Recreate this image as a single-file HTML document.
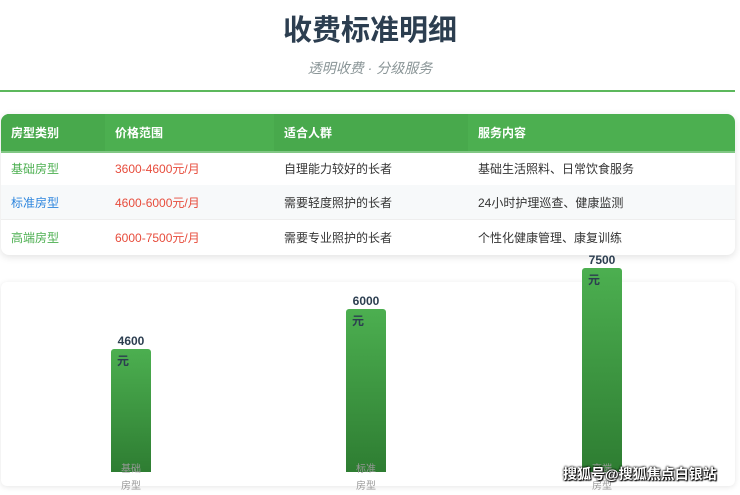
<!DOCTYPE html>
<html><head><meta charset="utf-8"><style>
body{margin:0;width:740px;height:491px;background:#fff;font-family:"Liberation Sans","Noto Sans CJK SC",sans-serif;position:relative;overflow:hidden}
.t{position:absolute;left:0;width:740px;text-align:center;top:11px;font-size:29px;font-weight:bold;color:#2c3e50;line-height:40px}
.s{position:absolute;left:0;width:740px;text-align:center;top:58px;font-size:14px;font-style:italic;color:#8a9597;line-height:20px}
.hr{position:absolute;left:0;top:90px;width:735px;height:2px;background:#5cb85c}
.tb{position:absolute;left:1px;top:114px;width:734px;height:141px;border-radius:8px;box-shadow:0 2px 8px rgba(0,0,0,.12);overflow:hidden;background:#fff}
.r{position:absolute;left:0;width:734px;font-size:12px;color:#333}
.r div{position:absolute;top:0;height:100%;display:flex;align-items:center;padding-left:10px;box-sizing:border-box}
.h{top:0;height:37px;background:#4caf50;color:#fff;font-weight:bold;border-bottom:2px solid #81c784}
.h div:nth-child(odd){background:#48a94c}
.c1{left:0;width:104px}.c2{left:104px;width:169px}.c3{left:273px;width:194px}.c4{left:467px;width:267px}
.g{color:#4caf50}.b{color:#2e86de}.p{color:#e74c3c}
.ch{position:absolute;left:1px;top:282px;width:734px;height:204px;box-shadow:0 1px 6px rgba(0,0,0,.1);border-radius:6px;background:#fff}
.bar{position:absolute;width:40px;border-radius:3px 3px 0 0;background:linear-gradient(#4caf50,#2e7d32)}
.v{position:absolute;width:60px;text-align:center;font-size:12px;font-weight:bold;color:#2c3e50}
.y{position:absolute;font-size:12px;font-weight:bold;color:#2c3e50}
.l{position:absolute;width:40px;text-align:center;font-size:10px;color:#999;line-height:17px}
.wm{position:absolute;left:563px;top:464px;font-size:14px;font-weight:bold;color:#fff;text-shadow:0 0 2px #000,0 0 2px #000,1px 1px 1px #000}
</style></head><body>
<div class="t">收费标准明细</div>
<div class="s">透明收费 · 分级服务</div>
<div class="hr"></div>
<div class="tb">
<div class="r h"><div class="c1">房型类别</div><div class="c2">价格范围</div><div class="c3">适合人群</div><div class="c4">服务内容</div></div>
<div class="r" style="top:37px;height:34px"><div class="c1 g">基础房型</div><div class="c2 p">3600-4600元/月</div><div class="c3">自理能力较好的长者</div><div class="c4">基础生活照料、日常饮食服务</div></div>
<div class="r" style="top:71px;height:34px;background:#f7f9fa;border-bottom:1px solid #eee"><div class="c1 b">标准房型</div><div class="c2 p">4600-6000元/月</div><div class="c3">需要轻度照护的长者</div><div class="c4">24小时护理巡查、健康监测</div></div>
<div class="r" style="top:105px;height:36px"><div class="c1 g">高端房型</div><div class="c2 p">6000-7500元/月</div><div class="c3">需要专业照护的长者</div><div class="c4">个性化健康管理、康复训练</div></div>
</div>
<div class="ch"></div>
<div class="bar" style="left:111px;top:349px;height:123px"></div>
<div class="bar" style="left:346px;top:309px;height:163px"></div>
<div class="bar" style="left:582px;top:268px;height:204px"></div>
<div class="v" style="left:101px;top:334px">4600</div>
<div class="v" style="left:336px;top:294px">6000</div>
<div class="v" style="left:572px;top:253px">7500</div>
<div class="y" style="left:117px;top:352px">元</div>
<div class="y" style="left:352px;top:312px">元</div>
<div class="y" style="left:588px;top:271px">元</div>
<div class="l" style="left:111px;top:461px">基础<br>房型</div>
<div class="l" style="left:346px;top:461px">标准<br>房型</div>
<div class="l" style="left:582px;top:461px">高端<br>房型</div>
<div class="wm">搜狐号@搜狐焦点白银站</div>
</body></html>
